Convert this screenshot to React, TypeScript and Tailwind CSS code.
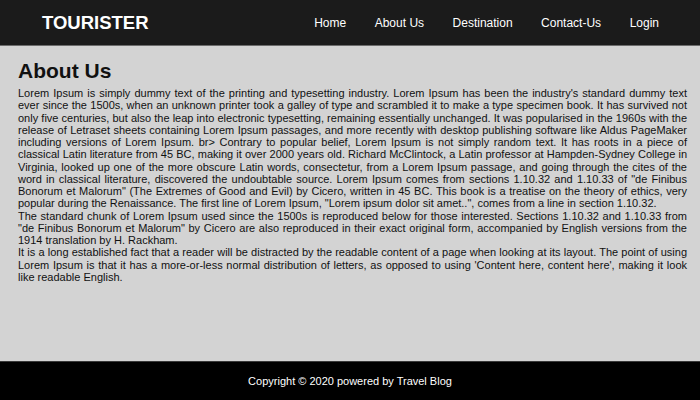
import React from "react";

const links = ["Home", "About Us", "Destination", "Contact-Us", "Login"];

const paragraphs = [
  `Lorem Ipsum is simply dummy text of the printing and typesetting industry. Lorem Ipsum has been the industry's standard dummy text ever since the 1500s, when an unknown printer took a galley of type and scrambled it to make a type specimen book. It has survived not only five centuries, but also the leap into electronic typesetting, remaining essentially unchanged. It was popularised in the 1960s with the release of Letraset sheets containing Lorem Ipsum passages, and more recently with desktop publishing software like Aldus PageMaker including versions of Lorem Ipsum. br> Contrary to popular belief, Lorem Ipsum is not simply random text. It has roots in a piece of classical Latin literature from 45 BC, making it over 2000 years old. Richard McClintock, a Latin professor at Hampden-Sydney College in Virginia, looked up one of the more obscure Latin words, consectetur, from a Lorem Ipsum passage, and going through the cites of the word in classical literature, discovered the undoubtable source. Lorem Ipsum comes from sections 1.10.32 and 1.10.33 of "de Finibus Bonorum et Malorum" (The Extremes of Good and Evil) by Cicero, written in 45 BC. This book is a treatise on the theory of ethics, very popular during the Renaissance. The first line of Lorem Ipsum, "Lorem ipsum dolor sit amet..", comes from a line in section 1.10.32.`,
  `The standard chunk of Lorem Ipsum used since the 1500s is reproduced below for those interested. Sections 1.10.32 and 1.10.33 from "de Finibus Bonorum et Malorum" by Cicero are also reproduced in their exact original form, accompanied by English versions from the 1914 translation by H. Rackham.`,
  `It is a long established fact that a reader will be distracted by the readable content of a page when looking at its layout. The point of using Lorem Ipsum is that it has a more-or-less normal distribution of letters, as opposed to using 'Content here, content here', making it look like readable English.`,
];

export default function App() {
  return (
    <div className="flex min-h-screen flex-col bg-[#d3d3d3] font-['Liberation_Sans',Arial,sans-serif]">
      <header className="flex h-[46px] items-center justify-between border-b border-[#6b6b6b] bg-[#1b1b1b] pl-[42px] pr-[41px]">
        <span className="text-[18.5px] font-bold text-white">TOURISTER</span>
        <nav className="flex gap-[28.5px]">
          {links.map((link) => (
            <a key={link} href="#" className="text-[12px] text-white">
              {link}
            </a>
          ))}
        </nav>
      </header>

      <main className="flex-1 pl-[18px] pr-[13px] pt-[13px]">
        <h1 className="mb-[4px] text-[21px] font-bold leading-[24px] text-[#111]">
          About Us
        </h1>
        {paragraphs.map((text, idx) => (
          <p key={idx} className="text-justify text-[11px] leading-[12.25px] text-[#111]">
            {text}
          </p>
        ))}
      </main>

      <footer className="flex h-[39px] items-center justify-center border-t border-[#3a3a3a] bg-black">
        <span className="text-[11px] text-white">Copyright © 2020 powered by Travel Blog</span>
      </footer>
    </div>
  );
}
